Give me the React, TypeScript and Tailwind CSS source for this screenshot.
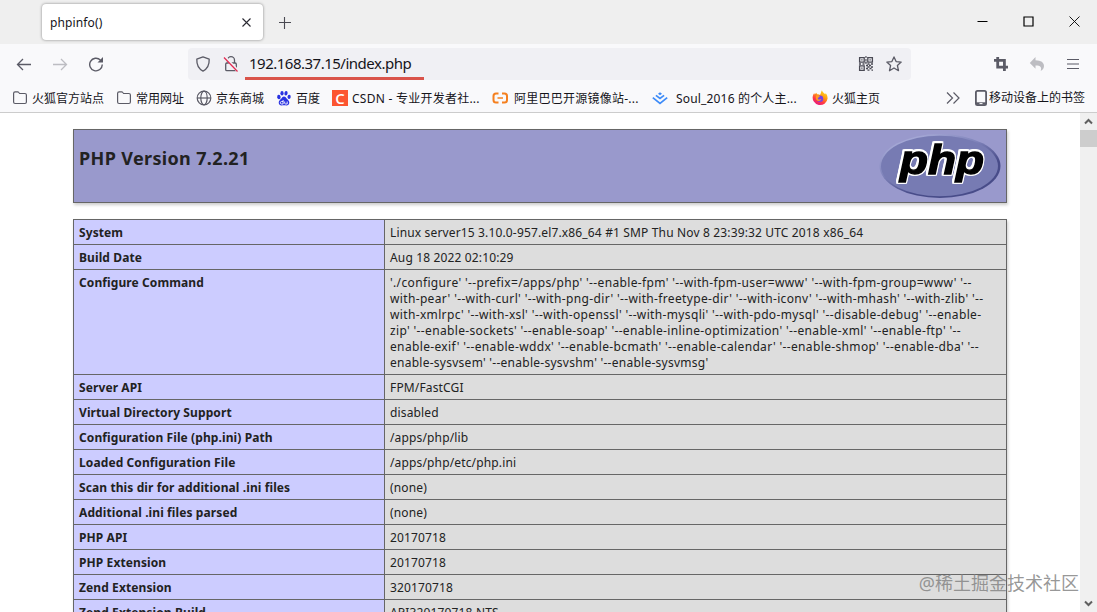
import type { ReactNode } from 'react'

interface Bookmark {
    label: string
    icon: ReactNode
    className: string
    labelClassName?: string
}

const FolderIcon = () => (
    <svg width="16" height="16" viewBox="0 0 16 16" fill="none" stroke="#5b5b66" strokeWidth="1.2">
        <path d="M1.6 3.4c0-.9.6-1.5 1.5-1.5h2.5c.5 0 .9.2 1.2.6l.8 1h5.3c.9 0 1.500.6 1.500 1.500v7c0 .9-.6 1.500-1.500 1.500H3.100c-.9 0-1.500-.6-1.500-1.500z" />
    </svg>
)

const GlobeIcon = () => (
    <svg width="16" height="16" viewBox="0 0 16 16" fill="none" stroke="#5b5b66" strokeWidth="1.2">
        <circle cx="8" cy="8" r="6.8" />
        <ellipse cx="8" cy="8" rx="3.2" ry="6.8" />
        <path d="M1.2 8h13.6" />
    </svg>
)

const BaiduIcon = () => (
    <svg width="16" height="16" viewBox="0 0 16 16" fill="#2932e1">
        <ellipse cx="2.9" cy="7" rx="1.7" ry="2.2" transform="rotate(-10 2.9 7)" />
        <ellipse cx="6" cy="3.3" rx="1.6" ry="2.3" />
        <ellipse cx="10" cy="3.3" rx="1.6" ry="2.3" transform="rotate(10 10 3.3)" />
        <ellipse cx="13.1" cy="6.9" rx="1.6" ry="2.1" transform="rotate(10 13.1 6.9)" />
        <path d="M8 6.600c1.300 0 1.800.9 2.600 1.900.9 1.100 2.700 2 2.700 4 0 1.900-1.300 2.900-2.900 2.900-1 0-1.500-.2-2.400-.2s-1.400.2-2.400.2c-1.600 0-2.900-1-2.900-2.900 0-2 1.800-2.900 2.700-4 .8-1 1.300-1.900 2.600-1.900z" />
        <path d="M7.100 10v4H5.600a1.200 1.200 0 0 1 0-2.500h1.500M8.700 11.500v1.700q0 .8.9.8h1.600v-2.500" fill="none" stroke="#fff" strokeWidth=".9" />
    </svg>
)

const CsdnIcon = () => (
    <span className="flex size-4 items-center justify-center bg-[#fc5531] font-['Open_Sans',sans-serif] text-[15px] leading-none font-semibold text-white">
        C
    </span>
)

const AliyunIcon = () => (
    <svg width="18" height="16" viewBox="0 0 18 16" fill="none" stroke="#f5801f">
        <path d="M6.500 3.500H4Q1.500 3.500 1.500 6v4q0 2.500 2.500 2.500h2.500M10 3.500h2.500Q15 3.500 15 6v4q0 2.500-2.500 2.500H10" strokeWidth="2" />
        <path d="M5.500 8H11" strokeWidth="1.500" />
    </svg>
)

const JuejinIcon = () => (
    <svg width="16" height="16" viewBox="0 0 16 16" fill="none" stroke="#3d8bf8" strokeWidth="1.7">
        <path d="M8 2.200 10 3.800 8 5.300 6 3.800z" fill="#3d8bf8" stroke="none" />
        <path d="M3.900 5.300 8 8.500l4.100-3.200M.8 7.600 8 13.300l7.200-5.700" />
    </svg>
)

const FirefoxIcon = () => (
    <svg width="16" height="16" viewBox="0 0 16 16">
        <defs>
            <linearGradient id="fox" x1=".8" y1="0" x2=".25" y2="1">
                <stop offset="0" stopColor="#ffe226" />
                <stop offset=".4" stopColor="#ff980e" />
                <stop offset=".7" stopColor="#ff3647" />
                <stop offset="1" stopColor="#e31587" />
            </linearGradient>
        </defs>
        <path d="M9.900.3c.6 1.800 2 2.600 3.200 4 .5-.2.500-.8.400-1.200 1.300 1.200 2.100 3.200 2.100 5.400A7.500 7.500 0 1 1 .9 5.700c.2-1 .8-2 1.400-2.600l.2 1.400 1.900-1.700.5 1.500c1.500-.2 2.500.1 3.100.7.900-1.300.9-3.200 1.900-4.700z" fill="url(#fox)" />
        <circle cx="8" cy="8.8" r="3.2" fill="#7542e5" />
        <path d="M4.300 5.600c1.600-.6 3.100.1 3.500.9-.4 1.100-2 .8-2 1.900 0 1.200 2.500 1.600 3.600.7-.6 2.200-3.700 2.800-5 .6-.8-1.300-.8-3-.1-4.100z" fill="#ff9a20" />
    </svg>
)

const bookmarks: Bookmark[] = [
    { label: '火狐官方站点', icon: <FolderIcon />, className: 'w-[104px]' },
    { label: '常用网址', icon: <FolderIcon />, className: 'w-20' },
    { label: '京东商城', icon: <GlobeIcon />, className: 'w-20' },
    { label: '百度', icon: <BaiduIcon />, className: 'w-14' },
    { label: 'CSDN - 专业开发者社...', icon: <CsdnIcon />, className: 'w-40', labelClassName: 'tracking-[0.25px]' },
    { label: '阿里巴巴开源镜像站-...', icon: <AliyunIcon />, className: 'w-40', labelClassName: 'tracking-[0.25px]' },
    { label: 'Soul_2016 的个人主...', icon: <JuejinIcon />, className: 'w-40', labelClassName: 'ml-1 tracking-[0.17px]' },
    { label: '火狐主页', icon: <FirefoxIcon />, className: 'w-[134px]' },
]

const configureLines = [
    "'./configure' '--prefix=/apps/php' '--enable-fpm' '--with-fpm-user=www' '--with-fpm-group=www' '--",
    "with-pear' '--with-curl' '--with-png-dir' '--with-freetype-dir' '--with-iconv' '--with-mhash' '--with-zlib' '--",
    "with-xmlrpc' '--with-xsl' '--with-openssl' '--with-mysqli' '--with-pdo-mysql' '--disable-debug' '--enable-",
    "zip' '--enable-sockets' '--enable-soap' '--enable-inline-optimization' '--enable-xml' '--enable-ftp' '--",
    "enable-exif' '--enable-wddx' '--enable-bcmath' '--enable-calendar' '--enable-shmop' '--enable-dba' '--",
    "enable-sysvsem' '--enable-sysvshm' '--enable-sysvmsg'",
]

const rows: [string, string | string[]][] = [
    ['System', 'Linux server15 3.10.0-957.el7.x86_64 #1 SMP Thu Nov 8 23:39:32 UTC 2018 x86_64'],
    ['Build Date', 'Aug 18 2022 02:10:29'],
    ['Configure Command', configureLines],
    ['Server API', 'FPM/FastCGI'],
    ['Virtual Directory Support', 'disabled'],
    ['Configuration File (php.ini) Path', '/apps/php/lib'],
    ['Loaded Configuration File', '/apps/php/etc/php.ini'],
    ['Scan this dir for additional .ini files', '(none)'],
    ['Additional .ini files parsed', '(none)'],
    ['PHP API', '20170718'],
    ['PHP Extension', '20170718'],
    ['Zend Extension', '320170718'],
    ['Zend Extension Build', 'API320170718,NTS'],
]

function TabBar() {
    return (
        <div className="flex h-11 shrink-0 items-start bg-[#efefef] pl-[42px]">
            <div className="mt-1 flex h-9 w-[221px] items-center justify-between rounded bg-white pr-3 pl-2 shadow-[0_0_3px_rgba(0,0,0,0.45)]">
                <span className="pt-[2px] text-[12px] tracking-[0.13px] text-[#15141a]">phpinfo()</span>
                <svg width="9" height="9" viewBox="0 0 9 9" stroke="#2b2a33" strokeWidth="1.1">
                    <path d="M.5.500l8 8M8.500.500l-8 8" />
                </svg>
            </div>
            <svg className="mt-[17px] ml-4" width="12" height="12" viewBox="0 0 12 12" stroke="#4a4a52" strokeWidth="1.1">
                <path d="M0 5.500h12M5.500 0v12" />
            </svg>
            {/* Window buttons */}
            <div className="mt-4 mr-[17px] ml-auto flex items-center gap-[35px]">
                <svg width="11" height="11" viewBox="0 0 11 11" stroke="#000">
                    <path d="M.5 5.500h10" />
                </svg>
                <svg width="11" height="11" viewBox="0 0 11 11" stroke="#000" fill="none">
                    <path d="M1 1h9v9H1z" strokeWidth="1.2" />
                </svg>
                <svg width="11" height="11" viewBox="0 0 11 11" stroke="#000" strokeWidth=".9">
                    <path d="M.5.500l10 10M10.500.500l-10 10" />
                </svg>
            </div>
        </div>
    )
}

const QrIcon = () => (
    <svg width="16" height="16" viewBox="0 0 16 16" fill="none" stroke="#4a4a54" strokeWidth="1.3">
        <path d="M1.600 1.600h4.600v4.600H1.600zM9.800 1.600h4.600v4.600H9.800zM1.600 9.800h4.600v4.600H1.600z" />
        <path d="M3.300 3.900h1.200M11.500 3.900h1.200M3.300 12.100h1.200M7.200 1h1.500M7.200 4h1.500M7.200 7h1.500M1 8h2M4.500 8h2M9.500 8h2M13 8h2M8 9.500h2M11 9.500h2M9.500 11h2M13 11h2M8 12.500h2M11.500 12.500h2M9.500 14.200h2M13.500 14.200H15M8 5.500v2" />
    </svg>
)

function NavBar() {
    return (
        <div className="flex h-10 shrink-0 items-center">
            <div className="flex w-[188px] shrink-0 items-center pl-4">
                <svg width="16" height="16" viewBox="0 0 16 16" fill="none" stroke="#5b5b66" strokeWidth="1.3">
                    <path d="M15 8.500H1.500M7 3 1.500 8.500 7 14" />
                </svg>
                <svg className="ml-5" width="16" height="16" viewBox="0 0 16 16" fill="none" stroke="#bdbdc2" strokeWidth="1.3">
                    <path d="M1 8.500h13.500M9 3l5.500 5.500L9 14" />
                </svg>
                <svg className="ml-5" width="16" height="16" viewBox="0 0 16 16" fill="none" stroke="#5b5b66" strokeWidth="1.4">
                    <path d="M14.300 8.600A6.300 6.300 0 1 1 12.400 4" />
                    <path d="M15 1v5.500H9.500z" fill="#5b5b66" stroke="none" />
                </svg>
            </div>
            <div className="flex h-8 w-[723px] shrink-0 items-center rounded bg-[#f0f0f4] pr-[9px] pl-[7px]">
                <svg width="16" height="16" viewBox="0 0 16 16" fill="none" stroke="#5b5b66" strokeWidth="1.3">
                    <path d="M8 .9 14.200 3.100c.2 5.300-1.200 9.600-6.200 12C3 12.700 1.600 8.400 1.800 3.100z" strokeLinejoin="round" />
                </svg>
                <svg className="ml-3" width="16" height="16" viewBox="0 0 16 16" fill="none" stroke="#5b5b66" strokeWidth="1.3">
                    <path d="M4.500 7V4.200a3.500 3.500 0 0 1 7 0V7" />
                    <rect x="2.7" y="7" width="10.6" height="7.7" rx="1.2" />
                    <path d="M1.500.8 15 15.200" stroke="#f0f0f4" strokeWidth="3" />
                    <path d="M1 1.500 14.500 15.500" stroke="#e22850" strokeWidth="1.2" />
                </svg>
                <div className="ml-[6px] flex h-8 w-[179px] flex-col justify-end border-b-[3px] border-[#d9534a]">
                    <span className="pb-[2px] pl-1 text-[15px] leading-[24px] tracking-[-0.5px] whitespace-nowrap text-[#15141a]">192.168.37.15/index.php</span>
                </div>
                <div className="ml-auto flex items-center gap-3">
                    <QrIcon />
                    <svg width="16" height="16" viewBox="0 0 16 16" fill="none" stroke="#5b5b66" strokeWidth="1.3" strokeLinejoin="round">
                        <path d="m8 .9 2.100 4.700 5.100.5-3.800 3.400 1.100 5.200L8 12l-4.500 2.700 1.100-5.200L.8 6.100l5.100-.5z" />
                    </svg>
                </div>
            </div>
            <div className="mr-4 ml-auto flex items-center gap-5">
                <svg width="16" height="16" viewBox="0 0 16 16" fill="none" stroke="#5b5b66" strokeWidth="2.8">
                    <path d="M4.700 1v10.200H15M1 4.400h10.400V15" />
                </svg>
                <svg width="16" height="16" viewBox="0 0 16 16" fill="#bdbdc2">
                    <path d="M6.500 1v3.300c5.500.1 8.500 2.300 8.500 5.700 0 2.200-1.200 4-3.300 5 1.200-3.500.3-5.500-5.200-5.500v3.300L.8 6.900z" />
                </svg>
                <svg width="16" height="16" viewBox="0 0 16 16" stroke="#5b5b66" strokeWidth="1.2">
                    <path d="M2 3.500h12M2 8h12M2 12.500h12" />
                </svg>
            </div>
        </div>
    )
}

function BookmarksBar() {
    return (
        <div className="flex h-7 shrink-0 items-center pl-3 text-[12px] leading-4 whitespace-nowrap text-[#15141a]">
            {bookmarks.map(bookmark => (
                <div key={bookmark.label} className={`flex shrink-0 items-center gap-1 ${bookmark.className}`}>
                    {bookmark.icon}
                    <span className={`pt-[2px] ${bookmark.labelClassName ?? ''}`}>{bookmark.label}</span>
                </div>
            ))}
            <svg width="14" height="14" viewBox="0 0 14 14" fill="none" stroke="#5b5b66" strokeWidth="1.2">
                <path d="m1 1.500 5.500 5.500L1 12.500M7.500 1.500 13 7l-5.500 5.500" />
            </svg>
            <svg className="ml-[15px]" width="12" height="16" viewBox="0 0 12 16" fill="none" stroke="#5b5b66" strokeWidth="1.8">
                <rect x=".9" y=".9" width="10.2" height="14.2" rx="1.6" />
                <path d="M1 13.500h10" strokeWidth="2.400" />
                <path d="M4.500 13.600h3" strokeWidth="1" stroke="#fff" />
            </svg>
            <span className="ml-[2px]">移动设备上的书签</span>
        </div>
    )
}

function PhpLogo() {
    return (
        <svg width="122" height="66" viewBox="0 0 122 66">
            <defs>
                <linearGradient id="rim" x1=".1" y1="0" x2=".8" y2="1">
                    <stop offset="0" stopColor="#b4b7e0" />
                    <stop offset=".4" stopColor="#8084bb" />
                    <stop offset=".7" stopColor="#484c89" />
                    <stop offset="1" stopColor="#484c89" />
                </linearGradient>
            </defs>
            <ellipse cx="61" cy="33" rx="60.5" ry="32" fill="url(#rim)" />
            <ellipse cx="60.5" cy="33" rx="58.5" ry="30.3" fill="#777bb3" />
            <text
                x="21"
                y="41"
                textLength="84"
                lengthAdjust="spacingAndGlyphs"
                fontSize="41"
                fontWeight="700"
                fontStyle="italic"
                fill="#000"
                stroke="#000"
                strokeWidth="1.4"
                className="font-['Liberation_Sans',sans-serif] [filter:drop-shadow(1.3px_0_0_#fff)_drop-shadow(-1.3px_0_0_#fff)_drop-shadow(0_1.3px_0_#fff)_drop-shadow(0_-1.3px_0_#fff)]"
            >
                php
            </text>
        </svg>
    )
}

function InfoTable() {
    return (
        <table className="mt-4 w-[934px] table-fixed border-collapse text-[12px] leading-4 text-[#222] shadow-[1px_2px_3px_#ccc]">
            <colgroup>
                <col className="w-[311px]" />
                <col />
            </colgroup>
            <tbody>
                {rows.map(([name, value]) => (
                    <tr key={name}>
                        <td className="border border-[#666] bg-[#ccccff] px-[5px] pt-[5px] pb-[3px] align-top font-bold tracking-[0.1px] whitespace-nowrap">
                            {name}
                        </td>
                        <td className="border border-[#666] bg-[#dddddd] px-[5px] pt-[5px] pb-[3px] align-top tracking-[0.15px] whitespace-nowrap">
                            {Array.isArray(value)
                                ? value.map(line => (
                                      <div key={line} className="tracking-[0.35px] last:tracking-[0.26px]">
                                          {line}
                                      </div>
                                  ))
                                : value}
                        </td>
                    </tr>
                ))}
            </tbody>
        </table>
    )
}

function Scrollbar() {
    return (
        <div className="flex h-full w-[17px] shrink-0 flex-col items-center bg-[#f0f0f0]">
            <svg width="17" height="17" viewBox="0 0 17 17" fill="none" stroke="#606060" strokeWidth="2">
                <path d="M5 10.500 8.500 7l3.500 3.500" />
            </svg>
            <div className="h-[17px] w-full bg-[#cdcdcd]" />
            <svg className="mt-auto" width="17" height="17" viewBox="0 0 17 17" fill="none" stroke="#606060" strokeWidth="2">
                <path d="M5 6.500 8.500 10 12 6.500" />
            </svg>
        </div>
    )
}

export default function App() {
    return (
        <div className="relative flex h-[612px] w-[1097px] flex-col overflow-hidden bg-white font-['Noto_Sans','Noto_Sans_CJK_SC',sans-serif]">
            <TabBar />
            <div className="flex h-[69px] shrink-0 flex-col border-b border-[#ccc] bg-[#f9f9fb]">
                <NavBar />
                <BookmarksBar />
            </div>
            <div className="flex min-h-0 flex-1">
                <div className="flex flex-1 flex-col items-center overflow-hidden pt-4">
                    {/* Version header */}
                    <div className="flex h-[74px] w-[934px] shrink-0 items-start justify-between border border-[#666] bg-[#9999cc] px-[5px] text-[#222] shadow-[1px_2px_3px_#ccc]">
                        <h1 className="mt-4 text-[18px] leading-6 font-bold tracking-[0.35px]">PHP Version 7.2.21</h1>
                        <div className="mt-[3px]">
                            <PhpLogo />
                        </div>
                    </div>
                    <InfoTable />
                </div>
                <Scrollbar />
            </div>
            {/* Watermark */}
            <div className="absolute right-[18px] bottom-[17px] text-[18px] leading-6 whitespace-nowrap text-[#858585]/85">@稀土掘金技术社区</div>
        </div>
    )
}
